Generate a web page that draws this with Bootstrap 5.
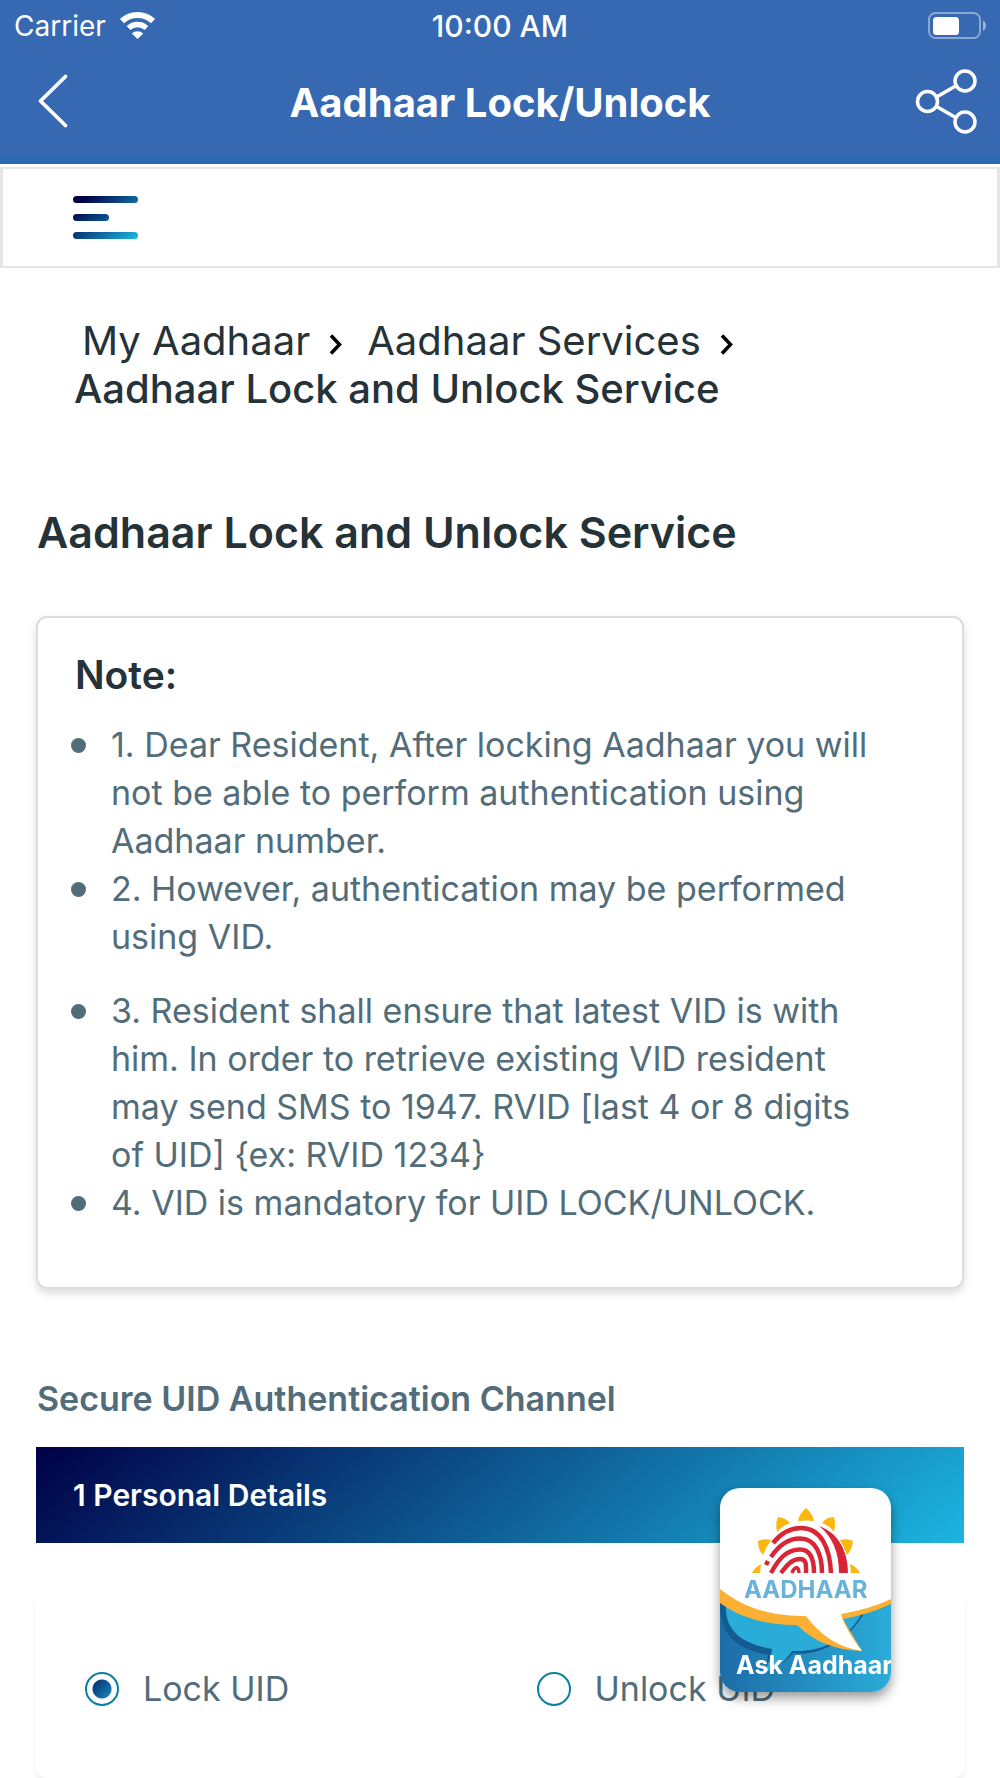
<!DOCTYPE html>
<html lang="en">
<head>
<meta charset="utf-8">
<meta name="viewport" content="width=device-width, initial-scale=1">
<title>Aadhaar Lock/Unlock</title>
<link href="https://cdn.jsdelivr.net/npm/bootstrap@5.3.0/dist/css/bootstrap.min.css" rel="stylesheet">
<style>
  body { font-family: Inter, Roboto, sans-serif; color: #526d79; font-size: 34px; line-height: 48px; }
  .app-header { background: #3669b1; border-bottom: 9px solid #2d68b2; color: #fff; }
  .status-row { height: 50px; padding: 1px 14px 0; font-size: 28px; line-height: 50px; }
  .status-row svg, .title-row svg { display: block; }
  .carrier { gap: 12px; }
  .clock { font-size: 30px; font-weight: 500; }
  .title-row { height: 105px; padding: 0 20px 4px; }
  .title-row h1 { padding-top: 4px; font-size: 40px; line-height: 48px; font-weight: 700; }
  .back { margin-left: 12px; }
  .side { flex: 1 1 0; }
  .menu-strip { margin-top: 3px; padding: 27px 70px 26px; border: 2px solid #e6e6e6; border-width: 2px 3px; }
  .menu-strip svg { display: block; }
  .crumbs { padding: 49px 74px 0; font-size: 40px; line-height: 48px; }
  .crumbs a, .crumbs .current { color: #253238; text-decoration: none; }
  .crumbs .first { padding-left: 8px; }
  .crumbs svg { margin: 0 24px 0 19px; }
  .crumbs .current { font-weight: 500; }
  .page-body { padding: 0 36px; }
  .page-title { margin: 93px 0 58px; padding-left: 1px; font-size: 43px; line-height: 52px; font-weight: 600; color: #253238; }
  .note-box { padding: 31px 37px 60px; border: 2px solid #dcdcdc; border-radius: 11px; box-shadow: 0 4px 8px rgba(0, 0, 0, .14); }
  .note-box h3 { margin: 0 0 20px; font-size: 39px; line-height: 52px; font-weight: 600; color: #253238; }
  .note-list { padding: 0 50px 0 36px; list-style: none; }
  .note-list li { display: flex; margin-left: -38px; }
  .note-list li::before { content: ""; flex: none; width: 15px; height: 15px; margin: 17px 25px 0 -2px; border-radius: 50%; background: #526d79; }
  .note-list .gap-above { margin-top: 26px; }
  .channel-title { margin: 86px 0 24px; padding-left: 1px; font-size: 34px; line-height: 48px; font-weight: 600; }
  .step-banner { padding: 24px 37px; font-size: 30px; line-height: 48px; font-weight: 600; color: #fff; background: linear-gradient(140deg, #000046, #1cb5e0); }
  .choice-box { margin-top: 47px; padding: 75px 46px 60px 49px; border-radius: 11px; box-shadow: 0 5px 6px rgba(0, 0, 0, .06); }
  .choice-box .second { padding-left: 35px; }
  .choice-box .form-check-input { flex: none; width: 34px; height: 34px; margin: 0; border: 2px solid #0b7f9f; background: #fff; box-shadow: none; }
  .choice-box .form-check-input:checked { background: radial-gradient(circle, transparent 9px, #fff 10px), linear-gradient(135deg, #000046, #1cb5e0); background-origin: border-box; }
  .ask-tile { position: fixed; right: 109px; bottom: 86px; width: 171px; border-radius: 20px; overflow: hidden; box-shadow: 0 6px 12px rgba(0, 0, 0, .4); }
  .ask-tile svg { display: block; width: 100%; }
</style>
<script src="https://cdn.jsdelivr.net/npm/bootstrap@5.3.0/dist/js/bootstrap.bundle.min.js"></script>
</head>
<body class="bg-white d-flex flex-column min-vh-100">
<header class="app-header">
  <div class="status-row d-flex align-items-center">
    <div class="side carrier d-flex align-items-center">
      <span>Carrier</span>
      <svg width="40" height="28" viewBox="0 0 40 28" fill="none" aria-hidden="true">
        <path d="M4 9.200a22.500 22.500 0 0 1 31 0" stroke="#fff" stroke-width="6"/>
        <path d="M10.500 16a13.300 13.300 0 0 1 18 0" stroke="#fff" stroke-width="5.500"/>
        <path d="M19.500 27l-5.700-5.600a8.500 8.500 0 0 1 11.400 0z" fill="#fff"/>
      </svg>
    </div>
    <span class="clock">10:00 AM</span>
    <div class="side d-flex justify-content-end">
      <svg width="60" height="28" viewBox="0 0 60 28" aria-hidden="true">
        <rect x="3" y="1" width="51" height="25" rx="6.500" fill="none" stroke="#fff" stroke-opacity=".42" stroke-width="2"/>
        <rect x="7" y="5" width="26" height="18" rx="3.500" fill="#fff"/>
        <path d="M57 8.500c4 2 4 8.500 0 10.500z" fill="#fff" fill-opacity=".5"/>
      </svg>
    </div>
  </div>
  <div class="title-row d-flex align-items-center">
    <div class="side">
      <button class="back btn p-0 border-0" type="button" aria-label="Back">
        <svg width="40" height="56" viewBox="0 0 40 56" fill="none" stroke="#fff" stroke-width="3.800" stroke-linecap="round" stroke-linejoin="round"><path d="M33.500 3.500 8.500 28l25 24.500"/></svg>
      </button>
    </div>
    <h1 class="m-0">Aadhaar Lock/Unlock</h1>
    <div class="side d-flex justify-content-end">
      <button class="btn p-0 border-0" type="button" aria-label="Share">
        <svg width="66" height="66" viewBox="0 0 66 66" fill="none" stroke="#fff" stroke-width="3.500"><circle cx="51" cy="13" r="10"/><circle cx="13.500" cy="33.500" r="10"/><circle cx="51" cy="54" r="10"/><path d="M22.500 29 42.500 17.500M22.500 38.500l20 11.500"/></svg>
      </button>
    </div>
  </div>
</header>
<div class="menu-strip">
  <button class="btn p-0 border-0 d-block" type="button" aria-label="Menu">
    <svg width="66" height="44" viewBox="0 0 66 44">
      <defs><linearGradient id="bars" gradientUnits="userSpaceOnUse" x1="14" y1="0" x2="58" y2="48"><stop stop-color="#000046"/><stop offset="1" stop-color="#1cb5e0"/></linearGradient></defs>
      <g fill="url(#bars)"><rect y="0" width="65" height="7" rx="3.500"/><rect y="18" width="36" height="7" rx="3.500"/><rect y="36" width="65" height="7" rx="3.500"/></g>
    </svg>
  </button>
</div>
<nav class="crumbs" aria-label="breadcrumb">
  <ol class="list-unstyled d-flex flex-wrap m-0">
    <li class="first"><a href="#">My Aadhaar</a><svg width="14" height="21" viewBox="0 0 14 21" fill="none" stroke="#000" stroke-width="3.500"><path d="M2 1.500l8.500 9-8.500 9"/></svg></li>
    <li><a href="#">Aadhaar Services</a><svg width="14" height="21" viewBox="0 0 14 21" fill="none" stroke="#000" stroke-width="3.500"><path d="M2 1.500l8.500 9-8.500 9"/></svg></li>
    <li class="current" aria-current="page">Aadhaar Lock and Unlock Service</li>
  </ol>
</nav>
<main class="page-body flex-grow-1 d-flex flex-column">
  <h2 class="page-title">Aadhaar Lock and Unlock Service</h2>
  <section class="note-box">
    <h3>Note:</h3>
    <ul class="note-list m-0">
      <li><span>1. Dear Resident, After locking Aadhaar you will not be able to perform authentication using Aadhaar number.</span></li>
      <li><span>2. However, authentication may be performed using VID.</span></li>
      <li class="gap-above"><span>3. Resident shall ensure that latest VID is with him. In order to retrieve existing VID resident may send SMS to 1947. RVID [last 4 or 8 digits of UID] {ex: RVID 1234}</span></li>
      <li><span>4. VID is mandatory for UID LOCK/UNLOCK.</span></li>
    </ul>
  </section>
  <h2 class="channel-title">Secure UID Authentication Channel</h2>
  <div class="step-banner">1 Personal Details</div>
  <form class="choice-box flex-grow-1">
    <div class="row g-0">
      <div class="col-6 d-flex align-items-center gap-4">
        <input class="form-check-input" type="radio" name="mode" id="lock" checked>
        <label for="lock">Lock UID</label>
      </div>
      <div class="col-6 second d-flex align-items-center gap-4">
        <input class="form-check-input" type="radio" name="mode" id="unlock">
        <label for="unlock">Unlock UID</label>
      </div>
    </div>
  </form>
</main>
<button class="ask-tile btn p-0 border-0" type="button" aria-label="Ask Aadhaar">
  <svg viewBox="0 0 171 204" font-family="Inter, sans-serif">
    <defs><linearGradient id="sea"><stop stop-color="#1d6da7"/><stop offset="1" stop-color="#2aacd9"/></linearGradient></defs>
    <rect width="171" height="204" fill="url(#sea)"/>
    <path d="M0 112C0 150 16 160 48 167L46 183 Q66 175 73 165C98 169 130 152 144 125z" fill="#135b91"/>
    <path d="M6 116C4 144 24 156 52 161 51 169 49 176 43 184 56 182 66 172 72 163 104 164 128 151 142 125z" fill="#2aacd9"/>
    <path d="M0 90V115Q30 137 77 137C94 154 115 162 142 163L123 131Q150 126 171 116V90z" fill="#fbb033"/>
    <path d="M0 0H171V111Q150 121 121 126 125 141 142 163 108 158 86 128 34 129 0 101z" fill="#fff"/>
    <g fill="#fab70f">
      <path d="M86 20Q79 26 78 33Q86 32 94 33Q93 26 86 20z"/>
      <path d="M114 29Q106 29 102 35Q110 38 114 44Q116 36 114 29z"/>
      <path d="M58 29Q66 30 70 35Q62 38 57 44Q55 36 58 29z"/>
      <path d="M133 53Q128 50 120 52Q124 59 127 67Q132 62 133 53z"/>
      <path d="M38 53Q44 50 51 52Q46 59 43 67Q38 62 38 53z"/>
      <path d="M140 85Q137 79 130 76L131 85z"/>
      <path d="M32 85Q35 79 41 76L40 85z"/>
    </g>
    <g fill="none" stroke="#d72636" stroke-width="4.500">
      <path d="M53 55C62 44 71 40 81 40 101 40 110 60 111 85"/>
      <path d="M51 69C59 57 68 50.500 80 50.500 96 50.500 102 67 102 85"/>
      <path d="M51 85C59 70 67 61.500 80 61.500 90 61.500 94 71 94 85"/>
      <path d="M61 85C67 77 72 71 80 71 87 71 86 78 86 85"/>
      <path d="M72 85C74 79 79 77 79 85" stroke-width="3.500"/>
      <path d="M46 77l2-4"/>
    </g>
    <path d="M99 38C119 45 128 64 128 85H119C119 65 113 49 99 38z" fill="#d72636"/>
    <text x="24" y="110" font-size="24" font-weight="700" fill="#68b3db">AADHAAR</text>
    <text x="16" y="186" font-size="25" font-weight="700" fill="#fff">Ask Aadhaar</text>
  </svg>
</button>
</body>
</html>
